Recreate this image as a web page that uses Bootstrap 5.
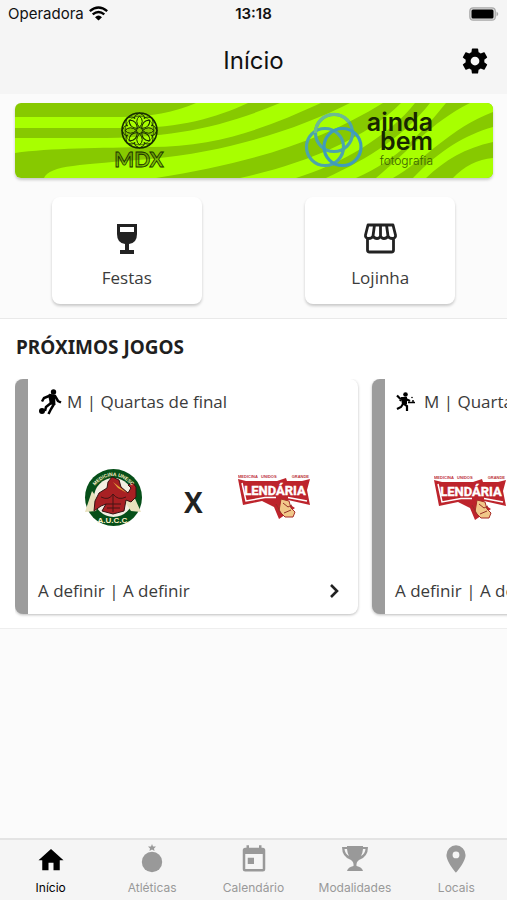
<!DOCTYPE html>
<html lang="pt-BR">
<head>
<meta charset="utf-8">
<meta name="viewport" content="width=device-width, initial-scale=1">
<title>Início</title>
<link href="https://cdn.jsdelivr.net/npm/bootstrap@5.3.0/dist/css/bootstrap.min.css" rel="stylesheet">
<style>
body{font-family:"Open Sans","Noto Sans",sans-serif;background:#fbfbfb;color:#3b3b3b;font-size:17px;line-height:24px}
svg{display:block;flex:none}
.app-top{background:#f5f5f5;font-family:Inter,sans-serif;color:#111}
.status{height:27px;font-size:15px;padding:0 8px 0 8px}
.status time{font-weight:600}
.titlebar{height:67px;padding:0 17px}
.titlebar h1{font-size:24px;line-height:28px;font-weight:400;color:#111}
.side{flex:1 1 0}
.banner{margin:9px 14px 0 15px;border-radius:6px;overflow:hidden;box-shadow:0 2px 3px #0003}
.banner svg{width:100%;height:auto}
.tiles{padding:19px 0 14px;border-bottom:1px solid #e9e9e9}
.tile{width:59%;height:107px;background:#fff;border-radius:8px;box-shadow:0 2px 3px #0003;color:#3b3b3b;padding-top:23px}
.games{background:#fff;border-bottom:1px solid #eee;padding:15px 0 14px 16px}
.games h2{font-family:"Noto Sans",sans-serif;font-size:19px;line-height:26px;font-weight:700;color:#1f1f1f;margin:0 0 19px}
.strip{gap:14px;overflow:hidden;margin-left:-1px;padding-bottom:4px;margin-bottom:-4px}
.game{flex:0 0 343px;height:235px;border-left:13px solid #9c9c9c;border-radius:8px;background:#fff;box-shadow:0 1px 3px #0004;color:#3b3b3b;padding:10px 17px 11px 10px}
.teams{gap:35px;padding-left:39px}
.crest{width:72px}
.versus{font-size:28px;line-height:32px;font-weight:700;color:#222;padding-top:10px}
.tabs{background:#f5f5f5;border-top:2px solid #e4e4e4;height:62px}
.tabs a{flex:1 1 0;font-family:Inter,sans-serif;font-size:12px;line-height:16px;color:#999;padding-top:4px;gap:6px}
.tabs a.active{color:#000}
</style>
<script src="https://cdn.jsdelivr.net/npm/bootstrap@5.3.0/dist/js/bootstrap.bundle.min.js"></script>
</head>
<body class="d-flex flex-column min-vh-100">
<header class="app-top">
  <div class="status d-flex align-items-center">
    <div class="side d-flex align-items-center gap-1"><span>Operadora</span>
      <svg width="21" height="15" viewBox="0 0 21 15" fill="none" stroke="#000" stroke-width="2.4"><path d="M1.8 5.2Q10.5-2 19.2 5.2M4.7 8.3Q10.5 3.5 16.3 8.3"/><path d="M7 11.2Q10.5 8 14 11.2L10.5 14.5Z" fill="#000" stroke="none"/></svg>
    </div>
    <time>13:18</time>
    <div class="side d-flex justify-content-end"><svg width="30" height="14" viewBox="0 0 30 14"><rect x=".8" y=".8" width="25.5" height="12.4" rx="3.5" fill="#ddd" stroke="#aaa" stroke-width="1.2"/><rect x="2.5" y="2.5" width="22" height="9" rx="1.5"/><path d="M27.5 4.5Q31 7 27.5 9.5Z" fill="#aaa"/></svg></div>
  </div>
  <div class="titlebar d-flex align-items-center">
    <span class="side"></span><h1 class="m-0">Início</h1>
    <div class="side d-flex justify-content-end"><button class="btn p-0 border-0" aria-label="Configurações"><svg width="30" height="30" viewBox="0 0 24 24"><path d="M12,15.5A3.5,3.5 0 0,1 8.5,12A3.5,3.5 0 0,1 12,8.5A3.5,3.5 0 0,1 15.5,12A3.5,3.5 0 0,1 12,15.5M19.43,12.97C19.47,12.65 19.5,12.33 19.5,12C19.5,11.67 19.47,11.34 19.43,11L21.54,9.37C21.73,9.22 21.78,8.95 21.66,8.73L19.66,5.27C19.54,5.05 19.27,4.96 19.05,5.05L16.56,6.05C16.04,5.66 15.5,5.32 14.87,5.07L14.5,2.42C14.46,2.18 14.25,2 14,2H10C9.75,2 9.54,2.18 9.5,2.42L9.13,5.07C8.5,5.32 7.96,5.66 7.44,6.05L4.95,5.05C4.73,4.96 4.46,5.05 4.34,5.27L2.34,8.73C2.21,8.95 2.27,9.22 2.46,9.37L4.57,11C4.53,11.34 4.5,11.67 4.5,12C4.5,12.33 4.53,12.65 4.57,12.97L2.46,14.63C2.27,14.78 2.21,15.05 2.34,15.27L4.34,18.73C4.46,18.95 4.73,19.03 4.95,18.95L7.44,17.94C7.96,18.34 8.5,18.68 9.13,18.93L9.5,21.58C9.54,21.82 9.75,22 10,22H14C14.25,22 14.46,21.82 14.5,21.58L14.87,18.93C15.5,18.67 16.04,18.34 16.56,17.94L19.05,18.95C19.27,19.03 19.54,18.95 19.66,18.73L21.66,15.27C21.78,15.05 21.73,14.78 21.54,14.63L19.43,12.97Z"/></svg></button></div>
  </div>
</header>

<main class="flex-grow-1">
  <div class="banner">
    <svg viewBox="15 103 478 75" role="img" aria-label="Patrocinadores">
      <path fill="#87c900" d="M15 103H493V178H15Z"/>
      <g fill="#a8ff00">
        <path d="M15 117H120C150 117 175 112 196 103H248C215 118 180 128 130 128H15Z"/>
        <path d="M15 138H95C170 138 220 128 280 103H321C270 126 220 147 150 147C100 148 50 148 15 153Z"/>
        <path d="M44 178C50 165 80 165 150 159C230 152 300 128 350 103H383C320 142 250 163 156 178Z"/>
        <path d="M240 178C300 165 365 140 401 103H415C390 135 340 165 296 178Z"/>
        <path d="M326 178C370 158 405 135 430 103H446C424 130 398 160 356 178Z"/>
        <path d="M376 178C410 150 430 123 470 103H493V112C450 128 425 160 393 178Z"/>
        <path d="M413 178C440 150 465 135 493 127V142C465 148 445 160 426 178Z"/>
        <path d="M453 178Q470 160 493 158V178Z"/>
      </g>
      <g fill="none" stroke="#172c00" stroke-width="1">
        <circle cx="139.500" cy="130.500" r="17.500" stroke-width="1.600"/><circle cx="139.500" cy="130.500" r="14.500" stroke-width=".6"/><circle cx="139.500" cy="130.500" r="3"/>
        <g><path id="petal" d="M139.500 127.500Q134 121 139.500 116Q145 121 139.500 127.500M134 119Q134 115 139.500 113Q145 115 145 119"/>
        <use href="#petal" transform="rotate(45 139.500 130.500)"/><use href="#petal" transform="rotate(90 139.500 130.500)"/><use href="#petal" transform="rotate(135 139.500 130.500)"/><use href="#petal" transform="rotate(180 139.500 130.500)"/><use href="#petal" transform="rotate(225 139.500 130.500)"/><use href="#petal" transform="rotate(270 139.500 130.500)"/><use href="#petal" transform="rotate(315 139.500 130.500)"/></g>
      </g>
      <text x="139" y="167" text-anchor="middle" font-family="Lato,sans-serif" font-weight="700" font-size="21" fill="#172c00" fill-opacity=".3" stroke="#172c00" stroke-width=".8">MDX</text>
      <g fill="none" stroke="#4da5aa" stroke-width="3.200"><circle cx="334" cy="133" r="18.500"/><circle cx="325" cy="147" r="18.500"/><circle cx="342.500" cy="147" r="18.500" stroke="#3f9cba"/><path d="M315.500 133A18.500 18.500 0 0 1 349 122" stroke="#6dbb91"/></g>
      <g fill="#172600" text-anchor="end" font-family="Inter,sans-serif"><text x="433" y="131" font-size="25" font-weight="600">ainda</text><text x="433" y="150" font-size="25" font-weight="600">bem</text><text x="433" y="165" font-size="12" font-weight="300" fill="#3a6200">fotografia</text></g>
    </svg>
  </div>

  <div class="tiles row g-0">
    <div class="col-6 d-flex justify-content-center"><a href="#" class="tile d-flex flex-column align-items-center text-decoration-none">
      <svg width="38" height="38" viewBox="0 0 38 38"><path d="M9 4H29V14Q29 23 21 24V30H26V34H12V30H17V24Q9 23 9 14ZM12 7V12H26V7Z" fill="#222" fill-rule="evenodd"/></svg><span class="mt-2">Festas</span></a></div>
    <div class="col-6 d-flex justify-content-center"><a href="#" class="tile d-flex flex-column align-items-center text-decoration-none">
      <svg width="38" height="38" viewBox="0 0 38 38" fill="none" stroke="#222" stroke-width="2.800" stroke-linejoin="round"><path d="M6.500 18V30Q6.500 32 8.500 32H30.500Q32.500 32 32.500 30V18M7 5H32L34.500 15Q35 18 31.500 18.500Q28 18.500 27 16Q25.500 18.500 23 18.500Q20.500 18.500 19.500 16Q18.500 18.500 16 18.500Q13.500 18.500 12 16Q11 18.500 7.500 18.500Q4 18 4.500 15ZM13.500 5L12 16M19.500 5V16M25.500 5L27 16"/></svg><span class="mt-2">Lojinha</span></a></div>
  </div>

  <section class="games">
    <h2>PRÓXIMOS JOGOS</h2>
    <div class="strip d-flex">
      <a href="#" class="game d-flex flex-column justify-content-between text-decoration-none">
        <div class="d-flex align-items-center gap-1">
          <svg width="25" height="26" viewBox="0 0 25 26"><circle cx="15.500" cy="3" r="2.700"/><circle cx="4" cy="22" r="3"/><path d="M11 6L17 7L20 12L23 13.500M11 7L6 9L4 12.500M16 15L13 20L10.500 25M13 14L8 18L7 22" fill="none" stroke="#000" stroke-width="2.500"/><path d="M10 5.500L17 6.500L17.500 16L12 15.500Z"/></svg>
          <span>M | Quartas de final</span></div>
        <div class="teams d-flex align-items-center">
          <div class="crest d-flex justify-content-center"><svg width="59" height="59" viewBox="0 0 59 59"><g id="crest-green"><circle cx="29.500" cy="29.500" r="28.500" fill="#064f19"/><circle cx="29.500" cy="29.500" r="19.500" fill="#f4eee2"/>
            <path d="M1 44L8 23L16 34L12 43ZM57 44L48 24L41 34L47 43Z" fill="#e8e1bd"/>
            <path d="M10 43L11 33L15 25L23 20L24 14L28 9L35 12L37 19L44 25L47 20L44 17L49 15L52 19L52 29L47 34L42 32L40 43L29 46L18 43L22 36L17 38Z" fill="#a82023" stroke="#361312"/>
            <path d="M29 14L43 25L34 20Z" fill="#e6aa38"/><path d="M17 29Q25 33 29 26Q34 33 42 29M29 27V44M22 36H37M23 40H36" fill="none" stroke="#451514"/>
            <path id="crest-arc" d="M8 21Q29-5 51 21" fill="none"/><text font-family="Liberation Sans,sans-serif" font-size="5" font-weight="700" fill="#fff1c8"><textPath href="#crest-arc" startOffset="50%" text-anchor="middle">MEDICINA UNESC</textPath></text>
            <text x="29.500" y="55" text-anchor="middle" font-family="Liberation Sans,sans-serif" font-size="8" font-weight="700" fill="#fff1c8">A.U.C.C.</text></g></svg></div>
          <span class="versus">X</span>
          <div class="crest"><svg width="72" height="46" viewBox="0 0 72 46"><g id="lendaria"><g font-family="Liberation Sans,sans-serif" font-weight="700" fill="#bd343c" font-size="4"><text x="0" y="4">MEDICINA</text><text x="23" y="4">UNIDOS</text><text x="71" y="4" text-anchor="end">GRANDE</text></g><path d="M0 5L8 7H39L48 4L49 7H64L72 5L69 16L72 31L50 26L48 28L57 34L41 45L36 33L24 27L5 31Z" fill="#bd242c"/><text x="37" y="21" text-anchor="middle" font-family="Roboto,sans-serif" font-size="13" font-weight="700" fill="#fff" stroke="#fff" stroke-width=".4">LENDÁRIA</text><path d="M4 9L8 27L27 23.500H38M69 27L50 23.500" fill="none" stroke="#fff" stroke-width="1.500"/><path d="M43 25L51 27L53 34L57 38L55 43L47 43L41 37Z" fill="#f1c889" stroke="#a52b26"/><path d="M45 29L50 33L54 31M46 39L53 36M38 30L43 39" fill="none" stroke="#963027"/></g></svg></div>
        </div>
        <div class="d-flex justify-content-between align-items-center"><span>A definir | A definir</span><svg width="14" height="18" viewBox="0 0 14 18" fill="none" stroke="#222" stroke-width="2.600"><path d="M4 3L10 9L4 15"/></svg></div>
      </a>
      <a href="#" class="game d-flex flex-column justify-content-between text-decoration-none">
        <div class="d-flex align-items-center gap-1">
          <svg width="25" height="26" viewBox="0 0 25 26"><circle cx="10.500" cy="5.500" r="2.300"/><circle cx="17" cy="8.500" r=".8"/><path d="M2 6.500L5 9.500L11 10L15 12M5 12L7 9M9 11V15L12 17V22M8 15L6 18L2 20" fill="none" stroke="#000" stroke-width="2.200"/><path d="M13 13.500H20M18 11V14" fill="none" stroke="#000" stroke-width="1.500"/><path d="M6 8L12 8L12 15L7 16Z"/></svg>
          <span>M | Quartas de final</span></div>
        <div class="teams d-flex align-items-center">
          <div class="crest"><svg width="72" height="59" viewBox="0 -7 72 59"><use href="#lendaria"/></svg></div>
          <span class="versus">X</span>
          <div class="crest d-flex justify-content-center"><svg width="59" height="59" viewBox="0 0 59 59"><use href="#crest-green"/></svg></div>
        </div>
        <div class="d-flex justify-content-between align-items-center"><span>A definir | A definir</span><svg width="14" height="18" viewBox="0 0 14 18" fill="none" stroke="#222" stroke-width="2.600"><path d="M4 3L10 9L4 15"/></svg></div>
      </a>
    </div>
  </section>
</main>

<nav class="tabs d-flex sticky-bottom">
  <a href="#" class="active d-flex flex-column align-items-center text-decoration-none" aria-current="page"><svg width="30" height="30" viewBox="0 0 24 24" fill="currentColor"><path d="M10 21V15H14V21H19V13H22L12 4L2 13H5V21Z"/></svg><span>Início</span></a>
  <a href="#" class="d-flex flex-column align-items-center text-decoration-none"><svg width="30" height="30" viewBox="0 0 30 30" fill="currentColor"><circle cx="15" cy="18" r="10.200"/><path d="M15 0L16 2.500H19L17 4.500L17.500 7L15 5.500L12.500 7L13 4.500L11 2.500H14Z"/></svg><span>Atléticas</span></a>
  <a href="#" class="d-flex flex-column align-items-center text-decoration-none"><svg width="30" height="30" viewBox="0 0 24 24" fill="currentColor"><path d="M7 11H12V16H7ZM5 3H6V1H8V3H16V1H18V3H19Q21 3 21 5V20Q21 22 19 22H5Q3 22 3 20V5Q3 3 5 3M5 8V20H19V8Z"/></svg><span>Calendário</span></a>
  <a href="#" class="d-flex flex-column align-items-center text-decoration-none"><svg width="30" height="30" viewBox="0 0 30 30" fill="currentColor"><path d="M7 2H23V3H28Q28 13 19 16Q16 18 16.500 22Q22 23 23 27H7Q8 23 13.500 22Q14 18 11 16Q2 13 2 3H7ZM4.500 5Q5 10 9 12Q7.500 10 7 5ZM23 5Q22.500 10 21 12Q25 10 25.500 5Z" fill-rule="evenodd"/></svg><span>Modalidades</span></a>
  <a href="#" class="d-flex flex-column align-items-center text-decoration-none"><svg width="32" height="30" viewBox="0 1 22 22" preserveAspectRatio="xMidYMid meet" fill="currentColor"><path d="M11 11.500A2.500 2.500 0 1 1 11 6.500A2.500 2.500 0 0 1 11 11.500M11 2A7 7 0 0 0 4 9C4 14.250 11 22 11 22S18 14.250 18 9A7 7 0 0 0 11 2Z" fill-rule="evenodd"/></svg><span>Locais</span></a>
</nav>
</body>
</html>
